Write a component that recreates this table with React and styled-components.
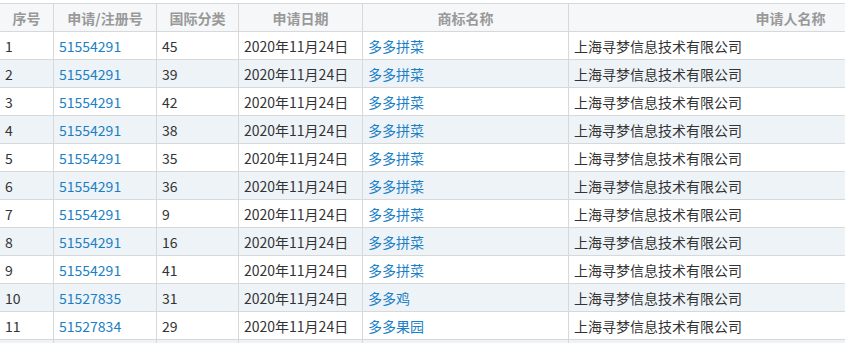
import React from "react";
import styled, { createGlobalStyle } from "styled-components";

const GlobalStyle = createGlobalStyle`
  html, body {
    margin: 0;
    padding: 0;
    background: #fff;
    overflow: hidden;
  }
  body {
    font-family: "Noto Sans CJK SC", "Noto Sans", sans-serif;
  }
`;

const rows = [
  ["1", "51554291", "45", "2020年11月24日", "多多拼菜"],
  ["2", "51554291", "39", "2020年11月24日", "多多拼菜"],
  ["3", "51554291", "42", "2020年11月24日", "多多拼菜"],
  ["4", "51554291", "38", "2020年11月24日", "多多拼菜"],
  ["5", "51554291", "35", "2020年11月24日", "多多拼菜"],
  ["6", "51554291", "36", "2020年11月24日", "多多拼菜"],
  ["7", "51554291", "9", "2020年11月24日", "多多拼菜"],
  ["8", "51554291", "16", "2020年11月24日", "多多拼菜"],
  ["9", "51554291", "41", "2020年11月24日", "多多拼菜"],
  ["10", "51527835", "31", "2020年11月24日", "多多鸡"],
  ["11", "51527834", "29", "2020年11月24日", "多多果园"],
];

const company = "上海寻梦信息技术有限公司";

const App = () => {
  return (
    <>
      <GlobalStyle />
      <Wrap>
        <Table>
          <colgroup>
            <col style={{ width: 54 }} />
            <col style={{ width: 103 }} />
            <col style={{ width: 82 }} />
            <col style={{ width: 124 }} />
            <col style={{ width: 206 }} />
            <col style={{ width: 444 }} />
          </colgroup>
          <thead>
            <tr>
              <Th>序号</Th>
              <Th>申请/注册号</Th>
              <Th>国际分类</Th>
              <Th>申请日期</Th>
              <Th>商标名称</Th>
              <Th>申请人名称</Th>
            </tr>
          </thead>
          <tbody>
            {rows.map((r, i) => (
              <Row key={i} $striped={i % 2 === 1}>
                <Td>{r[0]}</Td>
                <Td>
                  <LinkText>{r[1]}</LinkText>
                </Td>
                <Td>{r[2]}</Td>
                <Td>{r[3]}</Td>
                <Td>
                  <LinkText>{r[4]}</LinkText>
                </Td>
                <Td>{company}</Td>
              </Row>
            ))}
            {/* next row only peeks in at the bottom edge */}
            <Row $striped>
              <Td />
              <Td />
              <Td />
              <Td />
              <Td />
              <Td />
            </Row>
          </tbody>
        </Table>
      </Wrap>
    </>
  );
};

const Wrap = styled.div`
  padding-top: 3px;
  margin-left: -1px;
  width: 1100px;
`;

const Table = styled.table`
  border-collapse: collapse;
  table-layout: fixed;
  width: 1013px;
  font-size: 14px;
  color: #333;
`;

const Th = styled.th`
  height: 27px;
  padding: 0 5px;
  background-color: #f5f7f8;
  border: 1px solid #d6d8da;
  color: #999;
  font-weight: bold;
  text-align: center;
  vertical-align: middle;
  white-space: nowrap;
`;

const Row = styled.tr`
  background-color: ${(p) => (p.$striped ? "#eef3f8" : "#fff")};
`;

const Td = styled.td`
  height: 27px;
  padding: 0 5px;
  border: 1px solid #d6d8da;
  text-align: left;
  vertical-align: middle;
  white-space: nowrap;
  line-height: 20px;
`;

const LinkText = styled.span`
  color: #1a80c6;
  cursor: pointer;
`;

export default App;
